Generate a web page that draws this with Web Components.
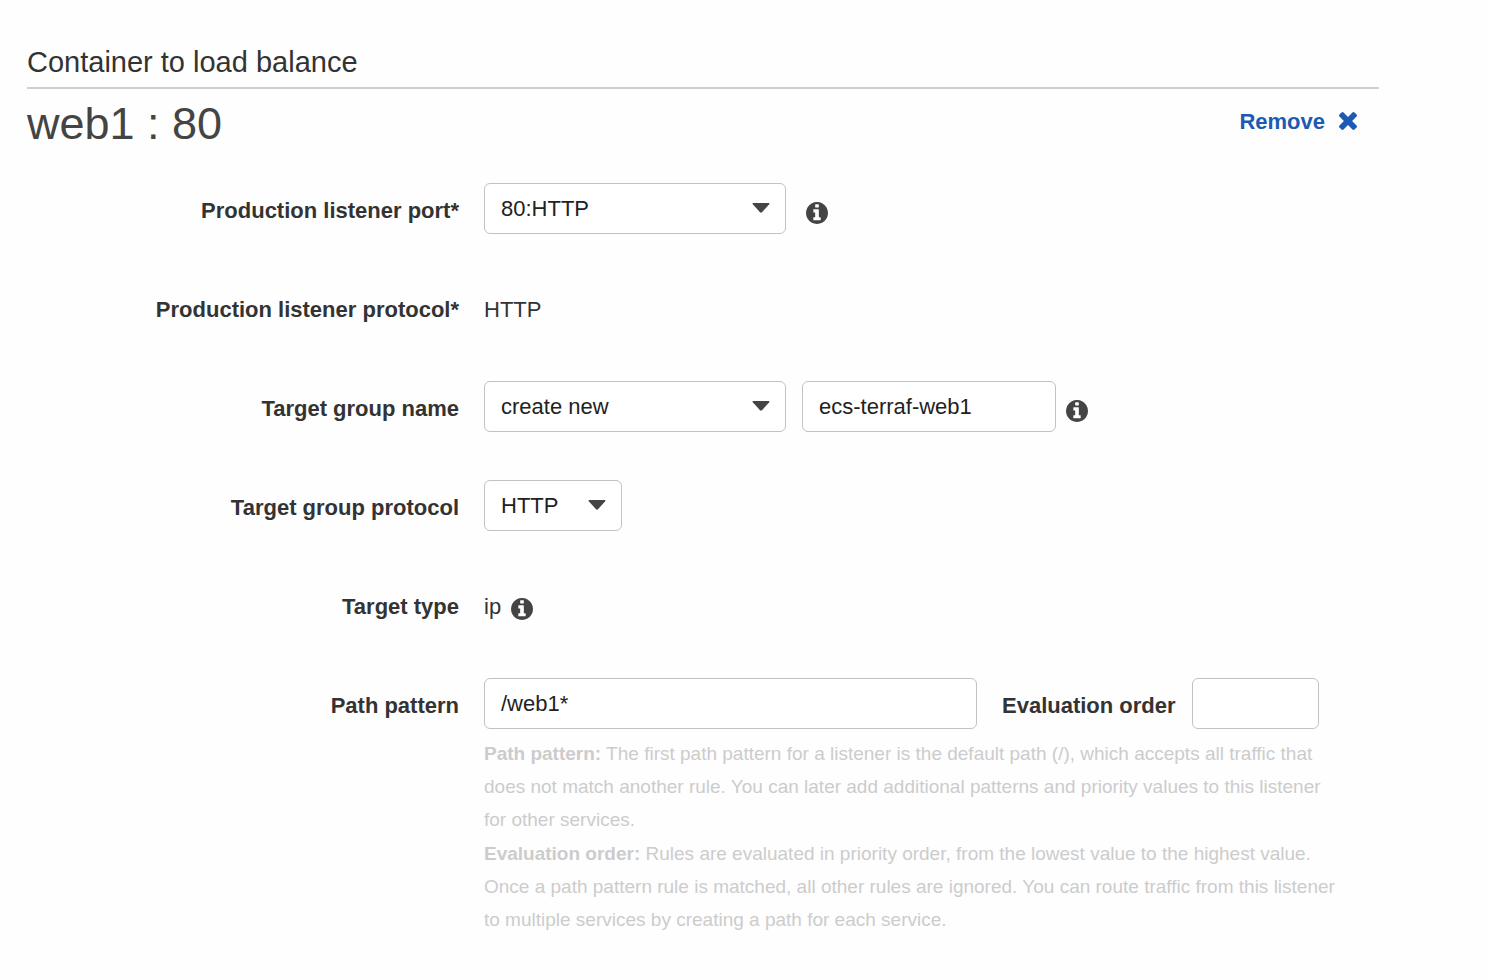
<!DOCTYPE html>
<html lang="en">
<head>
<meta charset="utf-8">
<meta name="viewport" content="width=device-width, initial-scale=1">
<title>Container to load balance</title>
<style>
  body { margin: 0; background: #fefefe; color: #333; font: 22px/30px "Liberation Sans", Arial, sans-serif; }
</style>
</head>
<body>
<load-balance-page></load-balance-page>

<template id="info-icon">
  <style>
    :host { display: block; flex: none; margin-top: 8px; }
    button { display: block; margin: 0; padding: 0; border: 0; background: none; color: #444; cursor: pointer; }
    svg { display: block; width: 22px; height: 22px; fill: currentColor; }
  </style>
  <button type="button" aria-label="More information">
    <svg viewBox="0 0 1536 1536" aria-hidden="true"><path d="M1024 1248v-160q0-14-9-23t-23-9h-96v-512q0-14-9-23t-23-9h-320q-14 0-23 9t-9 23v160q0 14 9 23t23 9h96v320h-96q-14 0-23 9t-9 23v160q0 14 9 23t23 9h448q14 0 23-9t9-23zM896 352v-160q0-14-9-23t-23-9h-192q-14 0-23 9t-9 23v160q0 14 9 23t23 9h192q14 0 23-9t9-23zM1536 768q0 209-103 385.5t-279.5 279.5-385.5 103-385.5-103-279.5-279.5-103-385.5 103-385.5 279.5-279.5 385.5-103 385.5 103 279.5 279.5 103 385.5z"/></svg>
  </button>
</template>

<template id="select-box">
  <style>
    :host { display: block; position: relative; width: 302px; }
    :host([size="small"]) { width: 138px; }
    ::slotted(select) {
      appearance: none; display: block; box-sizing: border-box; width: 100%; height: 51px; margin: 0;
      padding: 0 48px 0 16px; border: 1px solid #c2c2c2; border-radius: 6px; background: #fff;
      color: #222; font: inherit;
    }
    svg { position: absolute; right: 16px; top: 20px; width: 18px; height: 10px; fill: #444; pointer-events: none; }
  </style>
  <slot></slot>
  <svg viewBox="0 0 18 10" aria-hidden="true"><path d="M1.5 0h15q1.5 0 .7 1.3L10 9.3q-1 .9-2 0L.8 1.3Q0 0 1.5 0z"/></svg>
</template>

<template id="text-box">
  <style>
    :host { display: block; width: 254px; }
    :host([size="small"]) { width: 127px; }
    :host([size="large"]) { width: 493px; }
    ::slotted(input) {
      display: block; box-sizing: border-box; width: 100%; height: 51px; margin: 0; padding: 0 16px;
      border: 1px solid #c2c2c2; border-radius: 6px; background: #fff; color: #222; font: inherit;
    }
  </style>
  <slot></slot>
</template>

<template id="form-row">
  <style>
    :host { display: grid; grid-template-columns: 432px minmax(0, 1fr); column-gap: 25px; align-items: start; }
    .label, .line { display: flex; align-items: center; min-height: 51px; }
    .label { justify-content: flex-end; text-align: right; }
    ::slotted([slot="help"]) { grid-column: 2; }
  </style>
  <div class="label"><slot name="label"></slot></div>
  <div class="line"><slot></slot></div>
  <slot name="help"></slot>
</template>

<template id="help-text">
  <style>
    :host { display: block; max-width: 856px; margin-top: 8px; color: #ccc; font-size: 19px; line-height: 33px; }
    ::slotted(p) { margin: 0 0 1px; }
  </style>
  <slot></slot>
</template>

<template id="remove-button">
  <style>
    :host { display: block; }
    button { display: flex; align-items: center; gap: 14px; margin: 0; padding: 0; border: 0; background: none; color: #1d5ab4; font: inherit; font-weight: bold; cursor: pointer; }
    svg { display: block; width: 18px; height: 18px; margin-bottom: 2px; fill: currentColor; }
  </style>
  <button type="button"><slot></slot>
    <svg viewBox="302 366 1188 1188" aria-hidden="true"><path d="M1490 1322q0 40-28 68l-136 136q-28 28-68 28t-68-28l-294-294-294 294q-28 28-68 28t-68-28l-136-136q-28-28-28-68t28-68l294-294-294-294q-28-28-28-68t28-68l136-136q28-28 68-28t68 28l294 294 294-294q28-28 68-28t68 28l136 136q28 28 28 68t-28 68l-294 294 294 294q28 28 28 68z"/></svg>
  </button>
</template>

<template id="load-balance-page">
  <style>
    :host { display: block; padding: 44px 107px 32px 27px; }
    h2 { margin: 0; padding-bottom: 7px; border-bottom: 2px solid #d0d0d0; font-size: 29px; line-height: 36px; font-weight: normal; }
    header { display: flex; justify-content: space-between; padding: 7px 22px 0 0; }
    h1 { margin: 0; font-size: 45px; line-height: 56px; font-weight: normal; color: #444; }
    remove-button { margin-top: 11px; }
    form { display: grid; gap: 48px; margin-top: 31px; }
    label, .name { padding-top: 4px; font-weight: bold; }
    .value { padding-top: 4px; }
    .order { padding: 4px 16px 0 25px; }
    .near { margin-left: 10px; }
    .apart { margin-left: 20px; }
    .next { margin-left: 16px; }
  </style>
  <h2>Container to load balance</h2>
  <header>
    <h1>web1 : 80</h1>
    <remove-button>Remove</remove-button>
  </header>
  <form>
    <form-row>
      <label slot="label" for="port">Production listener port*</label>
      <select-box><select id="port"><option>80:HTTP</option></select></select-box>
      <info-icon class="apart"></info-icon>
    </form-row>
    <form-row>
      <span slot="label" class="name">Production listener protocol*</span>
      <span class="value">HTTP</span>
    </form-row>
    <form-row>
      <label slot="label" for="group">Target group name</label>
      <select-box><select id="group"><option>create new</option></select></select-box>
      <text-box class="next"><input id="group-name" type="text" value="ecs-terraf-web1" aria-label="New target group name"></text-box>
      <info-icon class="near"></info-icon>
    </form-row>
    <form-row>
      <label slot="label" for="protocol">Target group protocol</label>
      <select-box size="small"><select id="protocol"><option>HTTP</option></select></select-box>
    </form-row>
    <form-row>
      <span slot="label" class="name">Target type</span>
      <span class="value">ip</span>
      <info-icon class="near"></info-icon>
    </form-row>
    <form-row>
      <label slot="label" for="path">Path pattern</label>
      <text-box size="large"><input id="path" type="text" value="/web1*"></text-box>
      <label class="order" for="order">Evaluation order</label>
      <text-box size="small"><input id="order" type="text"></text-box>
      <help-text slot="help">
        <p><b>Path pattern:</b> The first path pattern for a listener is the default path (/), which accepts all traffic that does not match another rule. You can later add additional patterns and priority values to this listener for other services.</p>
        <p><b>Evaluation order:</b> Rules are evaluated in priority order, from the lowest value to the highest value. Once a path pattern rule is matched, all other rules are ignored. You can route traffic from this listener to multiple services by creating a path for each service.</p>
      </help-text>
    </form-row>
  </form>
</template>

<script>
  for (const name of ["info-icon", "select-box", "text-box", "form-row", "help-text", "remove-button", "load-balance-page"]) {
    customElements.define(name, class extends HTMLElement {
      constructor() {
        super();
        this.attachShadow({ mode: "open" }).append(document.getElementById(name).content.cloneNode(true));
      }
    });
  }
</script>
</body>
</html>
